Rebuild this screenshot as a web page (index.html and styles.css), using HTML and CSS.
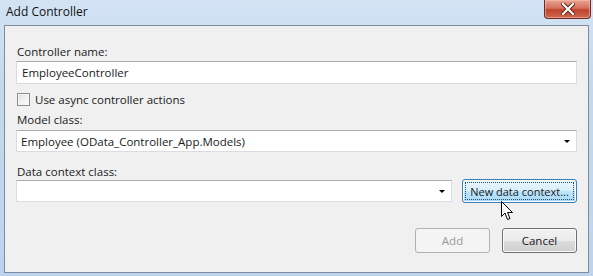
FILE: index.html
```html
<!DOCTYPE html>
<html lang="en">
<head>
    <meta charset="UTF-8">
    <title>Add Controller</title>
    <link rel="stylesheet" href="styles.css">
</head>
<body>
    <div class="window">
        <div class="titlebar">
            <span class="title">Add Controller</span>
            <button class="close-btn" aria-label="Close">
                <svg width="14" height="12" viewBox="0 0 14 12">
                    <path d="M2 1 L12 11 M12 1 L2 11" stroke="#5a1b12" stroke-width="4" stroke-linecap="square"/>
                    <path d="M2 1 L12 11 M12 1 L2 11" stroke="#ffffff" stroke-width="2.2" stroke-linecap="square"/>
                </svg>
            </button>
        </div>

        <div class="client">
            <label class="field-label" for="controller-name">Controller name:</label>
            <input class="text-input" type="text" id="controller-name" value="EmployeeController">

            <label class="check-row">
                <span class="checkbox"></span>
                <span>Use async controller actions</span>
            </label>

            <div class="field-label">Model class:</div>
            <div class="combo">
                <span class="combo-text">Employee (OData_Controller_App.Models)</span>
                <span class="combo-arrow"></span>
            </div>

            <div class="field-label">Data context class:</div>
            <div class="context-row">
                <div class="combo combo-short">
                    <span class="combo-text"></span>
                    <span class="combo-arrow"></span>
                </div>
                <button class="btn btn-hot"><span class="focus-rect">New data context...</span></button>
            </div>

            <div class="footer">
                <button class="btn btn-disabled" disabled>Add</button>
                <button class="btn">Cancel</button>
            </div>

            <svg class="cursor" width="13" height="20" viewBox="0 0 13 20">
                <path d="M0.5 0.5 L0.5 15.5 L4 12 L6.5 18.5 L9 17.5 L6.5 11.5 L11.5 11.5 Z" fill="#ffffff" stroke="#000000" stroke-width="1" stroke-linejoin="miter"/>
            </svg>
        </div>
    </div>
</body>
</html>
```

FILE: styles.css
```css
body {
    margin: 0;
    font-family: "Open Sans", "Noto Sans", sans-serif;
    font-size: 11.5px;
    color: #1a1a1a;
}
.window {
    width: 593px;
    height: 276px;
    box-sizing: border-box;
    background: linear-gradient(to bottom, #d3e3f4 0%, #c4d9ef 30%, #bcd4ee 100%);
    display: flex;
    flex-direction: column;
    padding: 0 4px 3px 4px;
}
.titlebar {
    height: 25px;
    display: flex;
    align-items: flex-start;
    justify-content: space-between;
}
.title {
    font-size: 12px;
    margin: 3px 0 0 2px;
    color: #111;
}
.close-btn {
    width: 47px;
    height: 19px;
    margin-right: -2px;
    border: 1px solid #6d2a22;
    border-top: none;
    border-radius: 0 0 4px 4px;
    background: linear-gradient(to bottom, #e8a493 0%, #d5705b 45%, #c0432c 55%, #cf6a4f 100%);
    box-shadow: inset 0 0 0 1px rgba(255, 200, 190, 0.5);
    display: flex;
    align-items: center;
    justify-content: center;
    padding: 0;
}
.client {
    position: relative;
    flex: 1;
    background: #f0f0f0;
    border: 1px solid #7f8b98;
    padding: 18px 11px 0 11px;
    display: flex;
    flex-direction: column;
}
.field-label {
    display: block;
    line-height: 15px;
    margin-left: 1px;
}
.text-input {
    margin-top: 2px;
    height: 23px;
    box-sizing: border-box;
    border: 1px solid #d9dde3;
    border-top-color: #abadb3;
    background: #fff;
    font: inherit;
    color: #1a1a1a;
    padding: 0 5px;
    outline: none;
}
.check-row {
    display: flex;
    align-items: center;
    gap: 5px;
    margin: 8px 0 5px 1px;
    line-height: 15px;
}
.checkbox {
    width: 11px;
    height: 11px;
    border: 1px solid #8e8f8f;
    background: linear-gradient(135deg, #dcdcdc 0%, #f4f4f4 60%, #ffffff 100%);
    box-shadow: inset 0 0 0 1px #f4f4f4;
}
.combo {
    margin-top: 3px;
    height: 22px;
    box-sizing: border-box;
    border: 1px solid #d9dde3;
    border-top-color: #abadb3;
    background: #fff;
    display: flex;
    align-items: center;
    justify-content: space-between;
    padding: 0 6px 0 4px;
    margin-bottom: 12px;
}
.combo-arrow {
    width: 0;
    height: 0;
    border-left: 3px solid transparent;
    border-right: 3px solid transparent;
    border-top: 3px solid #000;
    margin-top: 1px;
}
.context-row {
    display: flex;
    align-items: flex-start;
    gap: 10px;
    margin-top: 1px;
}
.combo-short {
    width: 436px;
    margin-top: 0;
    margin-bottom: 0;
}
.btn {
    font: inherit;
    width: 75px;
    height: 25px;
    box-sizing: border-box;
    border: 1px solid #707070;
    border-radius: 3px;
    background: linear-gradient(to bottom, #f2f2f2 0%, #ebebeb 50%, #dddddd 50%, #cfcfcf 100%);
    box-shadow: inset 0 0 0 1px #fbfbfb;
    color: #1a1a1a;
    padding: 0;
}
.btn-hot {
    width: 115px;
    height: 24px;
    margin-top: -1px;
    border-color: #3c7fb1;
    background: linear-gradient(to bottom, #eaf6fd 0%, #d9f0fc 50%, #bee6fd 50%, #a7d9f5 100%);
    display: flex;
    padding: 2px;
}
.focus-rect {
    flex: 1;
    border: 1px dotted #2a4f6c;
    display: flex;
    align-items: center;
    justify-content: center;
    white-space: nowrap;
    font-size: 11px;
}
.footer {
    display: flex;
    justify-content: flex-end;
    gap: 12px;
    margin-top: 25px;
}
.btn-disabled {
    border-color: #adb2b5;
    background: #f4f4f4;
    box-shadow: none;
    color: #9a9a9a;
}
.cursor {
    position: absolute;
    left: 496px;
    top: 175px;
}
```
